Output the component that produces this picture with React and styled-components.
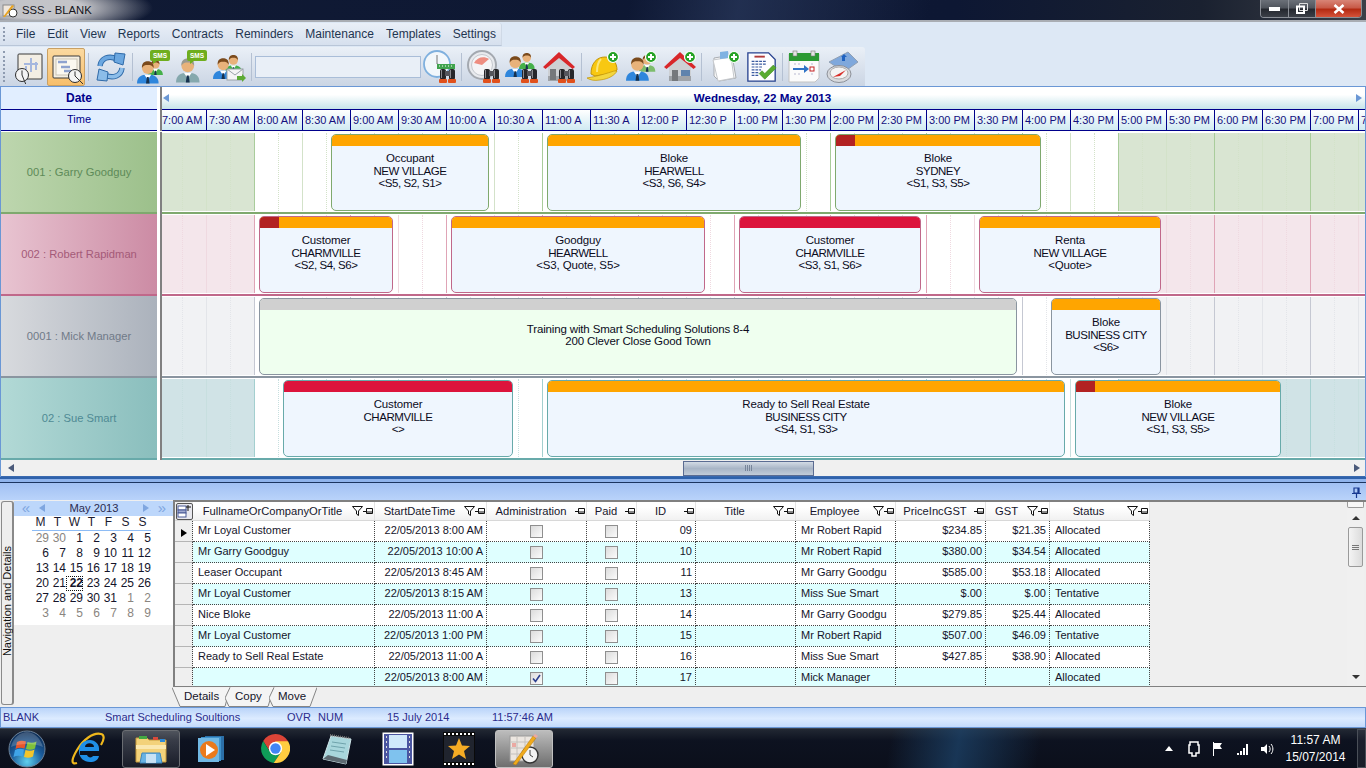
import React from "react";
import styled, { createGlobalStyle } from "styled-components";

const GlobalStyle = createGlobalStyle`
  html, body {
    margin: 0;
    padding: 0;
    width: 1366px;
    height: 768px;
    overflow: hidden;
    background: #dde8f5;
    font-family: "Liberation Sans", Arial, sans-serif;
    font-size: 11px;
  }
  * { box-sizing: border-box; }
`;

const Screen = styled.div`
  display: flex;
  flex-direction: column;
  width: 1366px;
  height: 768px;
  overflow: hidden;
`;

/* ---------- title bar ---------- */
const TitleBar = styled.div`
  display: flex;
  align-items: flex-start;
  justify-content: space-between;
  height: 22px;
  flex: none;
  padding-left: 2px;
  border-bottom: 2px solid #a9adb3;
  background:
    radial-gradient(ellipse 115px 26px at 38px 8px, rgba(205, 205, 208, 0.95) 40%, rgba(205, 205, 208, 0) 100%),
    linear-gradient(100deg, rgba(40, 55, 90, 0) 46%, rgba(40, 55, 90, 0.75) 54%, rgba(40, 55, 90, 0) 68%),
    linear-gradient(90deg, #101a34 0%, #0d1733 70%, #1a2130 88%, #3b3f47 100%);
`;

const TitleLeft = styled.div`
  display: flex;
  align-items: center;
  gap: 4px;
  height: 20px;
  font-size: 11.3px;
  color: #16161c;
`;

const WinButtons = styled.div`
  display: flex;
  height: 18px;
  margin-right: 4px;
  border: 1px solid #8b8f96;
  border-top: 0;
  border-radius: 0 0 4px 4px;
  overflow: hidden;
`;

const WinButton = styled.div`
  display: flex;
  align-items: center;
  justify-content: center;
  width: ${(p) => p.$w}px;
  border-left: ${(p) => (p.$first ? "0" : "1px solid #8b8f96")};
  background: ${(p) =>
    p.$close
      ? "linear-gradient(#d88476 0%, #c85a48 45%, #b32a12 55%, #d5533a 100%)"
      : "linear-gradient(#6b7078 0%, #50555d 45%, #25282f 55%, #3b3f47 100%)"};
`;

/* ---------- menu ---------- */
const MenuRow = styled.div`
  flex: none;
  height: 24px;
  padding-top: 1px;
  background: #dde8f5;
`;

const MenuStrip = styled.div`
  display: flex;
  align-items: center;
  width: 502px;
  height: 23px;
  padding-left: 16px;
  gap: 12px;
  border-bottom: 1px solid #b9c6d8;
  border-right: 1px solid #cfd9e6;
  border-radius: 0 3px 0 0;
  background: linear-gradient(#e9eff7, #d6e0ee);
  color: #1f3550;
  font-size: 12px;
  position: relative;
`;

const Grip = styled.span`
  position: absolute;
  left: 3px;
  top: 4px;
  bottom: 4px;
  width: 2px;
  border-left: 2px dotted #8e9bb0;
`;

const ToolRow = styled.div`
  flex: none;
  height: 40px;
  padding-top: 1px;
  background: #dde8f5;
`;

const ToolStrip = styled.div`
  display: flex;
  align-items: center;
  position: relative;
  width: 865px;
  height: 39px;
  padding-left: 10px;
  border-radius: 0 3px 0 0;
  background: linear-gradient(#eaf0f7, #cbd5e4);
`;

const ToolButton = styled.div`
  display: flex;
  align-items: center;
  justify-content: center;
  flex: none;
  width: ${(p) => p.$w}px;
  height: 38px;
  border: 1px solid ${(p) => (p.$on ? "#c9a063" : "transparent")};
  border-radius: 2px;
  background: ${(p) => (p.$on ? "linear-gradient(#fbd9a0, #f8bf6b)" : "none")};
`;

const ToolSep = styled.div`
  flex: none;
  width: ${(p) => p.$w || 5}px;
  height: 28px;
  display: flex;
  justify-content: center;

  &::before {
    content: "";
    width: 1px;
    background: #b4c0d2;
  }
`;

const SearchBox = styled.div`
  flex: none;
  width: 166px;
  height: 22px;
  margin: 0 1px;
  border: 1px solid #a9bdd8;
  background: #e9eff7;
`;

/* ---------- scheduler ---------- */
const Scheduler = styled.div`
  flex: none;
  height: 391px;
  display: flex;
  flex-direction: column;
  border-left: 1px solid #6a97d5;
  border-right: 1px solid #6a97d5;
  border-top: 1px solid #6a97d5;
  background: #fff;
`;

const HeadRow = styled.div`
  display: flex;
  flex: none;
  height: ${(p) => p.$h}px;
`;

const HeadLabel = styled.div`
  display: flex;
  align-items: center;
  justify-content: center;
  flex: none;
  width: 156px;
  margin-right: 3px;
  padding-bottom: ${(p) => (p.$bold ? 0 : 2)}px;
  background: #e1eeff;
  border-bottom: 1px solid #00008b;
  color: #00008b;
  font-weight: ${(p) => (p.$bold ? 700 : 400)};
  font-size: ${(p) => (p.$bold ? "12px" : "11px")};
`;

const HeadGap = styled.div`
  flex: none;
  width: 2px;
  background: #808080;
`;

const DateBar = styled.div`
  flex: 1;
  display: flex;
  align-items: center;
  justify-content: space-between;
  padding: 0 3px 1px 1px;
  background: linear-gradient(#fff 35%, #c6e4ea 100%);
  border-bottom: 1px solid #00008b;
  color: #00008b;
  font-weight: 700;
  font-size: 11.6px;
`;

const TinyArrow = styled.span`
  width: 0;
  height: 0;
  border-top: 4px solid transparent;
  border-bottom: 4px solid transparent;
  ${(p) =>
    p.$right
      ? `border-left: 6px solid ${p.$c || "#6a97d5"};`
      : `border-right: 6px solid ${p.$c || "#6a97d5"};`}
`;

const TimeStrip = styled.div`
  flex: 1;
  display: flex;
  overflow: hidden;
  border-bottom: 1px solid #00008b;
`;

const TimeCell = styled.div`
  flex: none;
  width: ${(p) => (p.$first ? 45 : 48)}px;
  padding-left: ${(p) => (p.$first ? 0 : 2)}px;
  border-right: 1px solid #00008b;
  background: linear-gradient(#fff, #d0eaf2);
  color: #14107e;
  font-size: 11px;
  line-height: 20px;
  white-space: nowrap;
  overflow: hidden;
`;

const RowsWrap = styled.div`
  flex: none;
  padding-top: 1px;
`;

const ResRow = styled.div`
  display: flex;
  height: 82px;
`;

const ResCell = styled.div`
  display: flex;
  align-items: center;
  justify-content: center;
  flex: none;
  width: 156px;
  margin-right: 3px;
  border-bottom: 2px solid ${(p) => p.$tone.line};
  background: linear-gradient(90deg, ${(p) => p.$tone.from}, ${(p) => p.$tone.to});
  color: ${(p) => p.$tone.text};
  font-size: 11.2px;
`;

const Lane = styled.div`
  flex: 1;
  min-width: 0;
  display: flex;
  position: relative;
  overflow: hidden;
  padding: 1px 0;
  border-bottom: 2px solid ${(p) => p.$tone.line};
`;

const Slot = styled.div`
  flex: none;
  position: relative;
  width: ${(p) => (p.$first ? 45 : 48)}px;
  border-right: 1px solid ${(p) => (p.$strong ? p.$tone.strong : p.$tone.soft)};
  background: ${(p) => (p.$off ? p.$tone.shade : "transparent")};

  &::after {
    content: "";
    position: absolute;
    top: 0;
    bottom: 0;
    right: 23px;
    border-left: 1px dotted ${(p) => p.$tone.soft};
  }
`;

const Appt = styled.div`
  position: absolute;
  top: 2px;
  left: ${(p) => p.$left}px;
  width: ${(p) => p.$width}px;
  height: 77px;
  display: flex;
  align-items: center;
  justify-content: center;
  padding-bottom: 3px;
  border: 1px solid ${(p) => p.$tone.line};
  border-radius: 5px;
  background: ${(p) => (p.$training ? "#efffef" : "#eff6fe")};
  text-align: center;
  overflow: hidden;
  z-index: 1;
`;

const ApptBar = styled.div`
  position: absolute;
  top: 0;
  left: 0;
  right: 0;
  height: 11px;
  background: ${(p) => p.$c};
`;

const ApptTag = styled.div`
  width: 19px;
  height: 11px;
  background: #b22222;
`;

const ApptText = styled.div`
  font-size: 11.5px;
  line-height: 12.5px;
  color: #0b0b1c;
  white-space: nowrap;
`;

const ApptLine = styled.div`
  letter-spacing: ${(p) => (p.$caps ? "-0.45px" : "-0.15px")};
`;

const HScroll = styled.div`
  flex: 1;
  display: flex;
  align-items: center;
  padding: 0 5px 0 7px;
  background: #f0f0f0;
  border-bottom: 1px solid #3a6ab0;
`;

const HTrack = styled.div`
  flex: 1;
  display: flex;
  height: 15px;
  padding-left: 669px;
`;

const HThumb = styled.div`
  display: flex;
  align-items: center;
  justify-content: center;
  gap: 1px;
  width: 131px;
  height: 15px;
  border: 1px solid #5b6c92;
  background: linear-gradient(#d3dbe5, #a8b5c6 50%, #c2ccd9);

  span {
    width: 1px;
    height: 6px;
    background: #77859a;
  }
`;

const Splitter = styled.div`
  flex: none;
  height: 23px;
  display: flex;
  align-items: center;
  justify-content: flex-end;
  padding: 5px 5px 0 0;
  border-top: 2px solid #2f62ab;
  background: linear-gradient(#90b4ec 0, #90b4ec 3px, #1c3560 3px, #1c3560 4px, #a2c1f3 4px, #b9d3fa 100%);
`;

/* ---------- bottom panel ---------- */
const Bottom = styled.div`
  flex: none;
  height: 207px;
  display: flex;
  background: #efefef;
`;

const NavTab = styled.div`
  flex: none;
  display: flex;
  align-items: center;
  justify-content: center;
  width: 13px;
  height: 204px;
  margin: 1px 0 0 1px;
  border: 1px solid #8a8a8a;
  border-right-width: 2px;
  border-radius: 3px;
  background: #eeeeee;
`;

const NavText = styled.span`
  writing-mode: vertical-rl;
  transform: rotate(180deg);
  font-size: 11px;
  color: #111;
  white-space: nowrap;
  padding-top: 4px;
`;

const Calendar = styled.div`
  flex: none;
  width: 159px;
  height: 124px;
  margin-top: 1px;
  background: #fff;
`;

const CalHead = styled.div`
  display: flex;
  align-items: center;
  height: 15px;
  padding: 0 3px 1px 4px;
  background: #bdd7fb;
  color: #2b2b50;
  font-size: 11.2px;
`;

const CalTitle = styled.div`
  flex: 1;
  text-align: center;
`;

const CalNav = styled.span`
  width: 16px;
  display: flex;
  justify-content: center;
  color: #7fa6e0;
  font-size: 15px;
  line-height: 12px;
`;

const CalWeek = styled.div`
  display: grid;
  grid-template-columns: repeat(7, 17px);
  margin-left: 18px;
  width: 119px;
  ${(p) => (p.$head ? "height: 15px; border-bottom: 1px solid #8ebcf5;" : "height: 15px;")}
`;

const CalDow = styled.span`
  text-align: center;
  font-size: 12px;
  line-height: 13px;
  color: #1a1a30;
`;

const CalDay = styled.span`
  position: relative;
  text-align: right;
  font-size: 12px;
  line-height: 15px;
  color: ${(p) => (p.$muted ? "#8a8580" : "#14142a")};
  ${(p) =>
    p.$today &&
    `font-weight: 700;
     outline: 1px dotted #111;
     outline-offset: -1px;`}
`;

const GridArea = styled.div`
  flex: 1;
  min-width: 0;
  display: flex;
  flex-direction: column;
`;

const GridFrame = styled.div`
  flex: none;
  height: 187px;
  display: flex;
  border-top: 2px solid #808080;
  border-left: 2px solid #808080;
  border-bottom: 1px solid #808080;
`;

const GridBody = styled.div`
  flex: 1;
  min-width: 0;
  overflow: hidden;
`;

const columns = "18px 182px 112px 100px 50px 59px 100px 100px 90px 64px 100px";

const GridHead = styled.div`
  display: grid;
  grid-template-columns: ${columns};
  width: 975px;
  height: 19px;
  background: linear-gradient(#fff 30%, #f1f1f1);
  border-bottom: 1px solid #d8d8d8;
`;

const GridCorner = styled.div`
  display: flex;
  align-items: center;
  justify-content: center;
  background: #f0f0f0;
`;

const HeadCell = styled.div`
  display: flex;
  align-items: center;
  border-right: 1px solid #e4e4e4;
  color: #16162c;
  font-size: 11.2px;
  white-space: nowrap;
`;

const HeadText = styled.span`
  flex: 1;
  text-align: center;
`;

const DataRow = styled.div`
  display: grid;
  grid-template-columns: ${columns};
  width: 975px;
  height: 21px;
`;

const RowHead = styled.div`
  display: flex;
  align-items: center;
  justify-content: center;
  padding-top: 4px;
  background: #efefef;
  border-bottom: 1px solid #b5b5b5;
  border-right: 1px dotted #444;
`;

const Cell = styled.div`
  display: flex;
  align-items: center;
  justify-content: ${(p) => (p.$align === "right" ? "flex-end" : p.$align === "center" ? "center" : "flex-start")};
  padding: 0 ${(p) => (p.$align === "right" ? 3 : 0)}px ${(p) => (p.$align === "center" ? 0 : 2)}px ${(p) => (p.$align === "left" ? 5 : 0)}px;
  background: ${(p) => (p.$alt ? "#dfffff" : "#fff")};
  border-right: 1px dotted #444;
  border-bottom: 1px dotted #444;
  color: #14142a;
  font-size: 11px;
  white-space: nowrap;
  overflow: hidden;
`;

const Check = styled.span`
  display: flex;
  align-items: center;
  justify-content: center;
  width: 13px;
  height: 13px;
  border: 1px solid #8f8f8f;
  background: linear-gradient(135deg, #dcdcdc, #fbfbfb);
`;

const VScroll = styled.div`
  flex: none;
  display: flex;
  flex-direction: column;
  align-items: center;
  width: 17px;
  margin-right: 2px;
  background: #f0f0f0;
`;

const VCap = styled.div`
  width: 17px;
  height: 6px;
  border: 1px solid #9a9a9a;
  border-top: 0;
  border-radius: 0 0 2px 2px;
  background: #f7f7f7;
`;

const VArrowUp = styled.span`
  margin-top: 8px;
  width: 0;
  height: 0;
  border-left: 4px solid transparent;
  border-right: 4px solid transparent;
  border-bottom: 4px solid #333;
`;

const VThumb = styled.div`
  display: flex;
  flex-direction: column;
  align-items: center;
  justify-content: center;
  gap: 1px;
  width: 15px;
  height: 40px;
  margin-top: 7px;
  border: 1px solid #9a9a9a;
  border-radius: 2px;
  background: linear-gradient(90deg, #f4f4f4, #dcdcdc);

  span {
    width: 7px;
    height: 1px;
    background: #777;
  }
`;

const VArrowDown = styled.span`
  margin-top: auto;
  margin-bottom: 7px;
  width: 0;
  height: 0;
  border-left: 4px solid transparent;
  border-right: 4px solid transparent;
  border-top: 4px solid #333;
`;

const TabStrip = styled.div`
  flex: none;
  display: flex;
  height: 20px;
  margin-left: -1px;
`;

const Tab = styled.div`
  position: relative;
  flex: none;
  width: ${(p) => p.$w}px;
  margin-left: ${(p) => p.$shift || 0}px;
  padding-left: ${(p) => p.$pad}px;
  font-size: 11.5px;
  line-height: 19px;
  color: #14142a;

  svg {
    position: absolute;
    left: 0;
    top: 0;
  }

  span {
    position: relative;
  }
`;

/* ---------- status + taskbar ---------- */
const StatusBar = styled.div`
  flex: none;
  display: flex;
  align-items: center;
  height: 21px;
  padding-bottom: 2px;
  border: 1px solid #6a97d5;
  background: linear-gradient(#bad4f9, #dcebff 55%, #c3dafb);
  color: #2b2b8c;
  font-size: 11px;
  white-space: nowrap;
`;

const StatusItem = styled.span`
  flex: none;
  width: ${(p) => p.$w}px;
  padding-left: 2px;
`;

const Taskbar = styled.div`
  flex: 1;
  display: flex;
  align-items: center;
  background:
    linear-gradient(100deg, rgba(30, 70, 110, 0) 65%, rgba(30, 70, 110, 0.7) 70%, rgba(30, 70, 110, 0) 76%),
    linear-gradient(#222833, #0d1220 30%, #0b0f1b);
  border-top: 1px solid #3b4350;
`;

const TaskIcon = styled.div`
  flex: none;
  display: flex;
  align-items: center;
  justify-content: center;
  width: ${(p) => p.$w}px;
  height: 38px;
  margin-left: ${(p) => p.$gap || 0}px;
  ${(p) =>
    p.$active === "dark" &&
    `border: 1px solid #6a6d72;
     border-radius: 3px;
     background: linear-gradient(rgba(255,255,255,.22), rgba(255,255,255,.06));`}
  ${(p) =>
    p.$active === "light" &&
    `border: 1px solid #c0c0c0;
     border-radius: 3px;
     background: linear-gradient(#bcbcbc, #6e6e6e);`}
`;

const Tray = styled.div`
  margin-left: auto;
  display: flex;
  align-items: center;
  gap: 10.5px;
  height: 100%;
`;

const Clock = styled.div`
  width: 68px;
  margin-left: -3px;
  text-align: center;
  color: #fff;
  font-size: 12px;
  line-height: 17px;
`;

const ShowDesktop = styled.div`
  width: 9px;
  height: 100%;
  margin-left: -3px;
  border: 1px solid #4a4f58;
  background: rgba(255, 255, 255, 0.06);
`;

/* ---------- drawings ---------- */
const Skin = "#e8b27a";

const Person = ({ x = 0, y = 0, s = 1, shirt = "#2f86dc", hair = "#7a4a1c" }) => (
  <g transform={`translate(${x} ${y}) scale(${s})`}>
    <path d="M0 26c0-7 4-10 12-10s12 3 12 10z" fill={shirt} />
    <path d="M8 16l4 6 4-6z" fill="#fff" />
    <path d="M11 19h2l1 7h-4z" fill="#17324f" />
    <circle cx="12" cy="9" r="6.5" fill={Skin} />
    <path d="M5.5 9C5 3 9 1.5 12 1.5S19 3 18.5 9C17 6 15 5.5 12 5.5S7 6 5.5 9z" fill={hair} />
  </g>
);

const Binoculars = ({ x = 0, y = 0, s = 1 }) => (
  <g transform={`translate(${x} ${y}) scale(${s})`}>
    <rect x="1" y="0" width="6" height="11" rx="2" fill="#26262a" />
    <rect x="10" y="0" width="6" height="11" rx="2" fill="#26262a" />
    <rect x="6" y="2" width="5" height="5" fill="#55555c" />
    <rect x="0" y="10" width="8" height="4" rx="1" fill="#e0501c" />
    <rect x="9" y="10" width="8" height="4" rx="1" fill="#e0501c" />
    <rect x="2" y="1" width="1" height="8" fill="#8a8a90" />
    <rect x="11" y="1" width="1" height="8" fill="#8a8a90" />
  </g>
);

const Plus = ({ x, y, r = 5.5 }) => (
  <g>
    <circle cx={x} cy={y} r={r} fill="#25a225" stroke="#fff" strokeWidth="1.2" />
    <path d={`M${x - 3} ${y}h6M${x} ${y - 3}v6`} stroke="#fff" strokeWidth="2" />
  </g>
);

const Bubble = ({ x, y }) => (
  <g transform={`translate(${x} ${y})`}>
    <path d="M2 0h16a2 2 0 0 1 2 2v7a2 2 0 0 1-2 2H7l-4 3 0-3H2a2 2 0 0 1-2-2V2a2 2 0 0 1 2-2z" fill="#6fae1e" />
    <text x="10" y="8" textAnchor="middle" fontSize="6.5" fontWeight="700" fill="#fff" fontFamily="Liberation Sans">SMS</text>
  </g>
);

const House = ({ x = 0, y = 0, s = 1, door = true }) => (
  <g transform={`translate(${x} ${y}) scale(${s})`}>
    <path d="M5 14L16 4l11 10v15H5z" fill="#cdd0d4" />
    <path d="M5 24h22v5H5z" fill="#9fa3a8" />
    <path d="M0 15L16 0l16 15-2.5 2L16 6 2.5 17z" fill="#d8272a" />
    {door && <rect x="8" y="18" width="6" height="11" fill="#75787c" />}
    {door && <rect x="17" y="18" width="9" height="6" fill="#5f83ad" />}
  </g>
);

const Svg = ({ w = 34, h = 34, children }) => (
  <svg width={w} height={h} viewBox={`0 0 ${w} ${h}`}>
    {children}
  </svg>
);

const ClockFace = ({ x, y, r }) => (
  <g>
    <circle cx={x} cy={y} r={r} fill="#f4f4f4" stroke="#2c2c2c" strokeWidth="1" />
    <path d={`M${x} ${y - r * 0.7}V${y}L${x + r * 0.5} ${y + r * 0.4}`} fill="none" stroke="#333" strokeWidth="1" />
  </g>
);

const IconChart = () => (
  <Svg>
    <rect x="6" y="4" width="24" height="25" rx="1" fill="#f3eee4" stroke="#3a3a3a" />
    <path d="M14 16v9M19 8v14M24 12v8M12 14h14" stroke="#a6b7de" strokeWidth="2" fill="none" />
    <ClockFace x="10" y="25" r="6.5" />
  </Svg>
);

const IconGantt = () => (
  <Svg>
    <rect x="4" y="6" width="27" height="22" rx="1" fill="#f5efe2" stroke="#3a3a3a" />
    <rect x="7" y="9" width="21" height="16" fill="#fbf8f0" stroke="#c9c4b6" />
    <path d="M9 12h9M12 17h9M15 21h7" stroke="#8ea2cf" strokeWidth="2.4" />
    <ClockFace x="26" y="26" r="6.5" />
  </Svg>
);

const IconRefresh = () => (
  <Svg>
    <path d="M6 16C7 8 15 5 23 9" fill="none" stroke="#2f6aa8" strokeWidth="5.5" />
    <path d="M6 16C7 8 15 5 23 9" fill="none" stroke="#6ba7e0" strokeWidth="3.6" />
    <path d="M21 3l10 1-2 11-9-3z" fill="#6ba7e0" stroke="#2f6aa8" />
    <path d="M28 18C27 26 19 29 11 25" fill="none" stroke="#2f6aa8" strokeWidth="5.5" />
    <path d="M28 18C27 26 19 29 11 25" fill="none" stroke="#8cbde9" strokeWidth="3.6" />
    <path d="M13 31L3 30l2-11 9 3z" fill="#8cbde9" stroke="#2f6aa8" />
  </Svg>
);

const IconSmsA = () => (
  <Svg>
    <Person x="11" y="9" s={0.62} shirt="#45b04a" />
    <Person x="0" y="10" s={0.9} />
    <Bubble x="13" y="0" />
  </Svg>
);

const IconSmsB = () => (
  <Svg>
    <Person x="1" y="7" s={0.98} shirt="#85a8ad" hair="#9a9a90" />
    <Bubble x="12" y="0" />
  </Svg>
);

const IconMail = () => (
  <Svg>
    <Person x="12" y="4" s={0.7} shirt="#45b04a" />
    <Person x="0" y="7" s={0.85} />
    <rect x="14" y="19" width="16" height="11" fill="#f4f4f4" stroke="#9aa2a8" />
    <path d="M14 19l8 6 8-6" fill="none" stroke="#9aa2a8" />
    <path d="M24 26h5v-2l4 4-4 4v-2h-5z" fill="#5dab35" />
  </Svg>
);

const IconClockFind = () => (
  <Svg>
    <circle cx="14" cy="14" r="13" fill="#f2f7fb" stroke="#7fb0de" strokeWidth="1.8" />
    <path d="M14 5v9l7 2" fill="none" stroke="#777" strokeWidth="1" />
    <rect x="14" y="14" width="18" height="5" fill="#3fa34d" />
    <path d="M16 16h14" stroke="#fff" strokeDasharray="1 2" />
    <Binoculars x="16" y="19" />
  </Svg>
);

const IconGauge = () => (
  <Svg>
    <circle cx="15" cy="15" r="14" fill="#e8eaee" stroke="#a4a9b0" strokeWidth="2" />
    <circle cx="15" cy="15" r="10.5" fill="#f4f4f6" stroke="#c4c8ce" />
    <path d="M7 13c3-6 10-7 15-4l-7 6z" fill="#ee8d80" />
    <Binoculars x="16" y="19" />
  </Svg>
);

const IconPeopleFind = () => (
  <Svg>
    <Person x="14" y="2" s={0.65} shirt="#45b04a" />
    <Person x="0" y="5" s={0.85} />
    <Binoculars x="16" y="19" />
  </Svg>
);

const IconHouseFind = () => (
  <Svg>
    <House y="2" door={false} />
    <rect x="7" y="19" width="6" height="11" fill="#75787c" />
    <Binoculars x="15" y="19" />
  </Svg>
);

const IconHelmet = () => (
  <Svg>
    <path d="M4 24c0-11 6-17 14-17s12 6 12 13l-4 3-18 3z" fill="#f8c812" stroke="#c29406" />
    <path d="M0 28c5-1 12-2 27-7l3 0c-2 4-8 8-17 9-6 1-10 0-13-2z" fill="#f3d640" stroke="#c29406" strokeWidth=".7" />
    <path d="M14 9c-3 3-4 8-4 13" fill="none" stroke="#fbe67a" strokeWidth="2" />
    <Plus x="26" y="7" />
  </Svg>
);

const IconPersonPlus = () => (
  <Svg>
    <Person x="14" y="4" s={0.68} shirt="#7dbd6c" />
    <Person x="1" y="6" s={0.95} />
    <Plus x="26" y="7" />
  </Svg>
);

const IconHousePlus = () => (
  <Svg>
    <House x="1" y="2" />
    <Plus x="27" y="7" />
  </Svg>
);

const IconNotePlus = () => (
  <Svg>
    <path d="M6 8l18-3 4 23-17 3-5-5z" fill="#f7f7f7" stroke="#a9adb2" />
    <path d="M5 10l18-3 3 21-16 3z" fill="#fff" stroke="#c5c8cc" />
    <path d="M12 2l8-1 1 7-9 1z" fill="#7fb2e2" />
    <Plus x="26" y="7" />
  </Svg>
);

const IconChecklist = () => (
  <Svg>
    <path d="M2 2h22l7 7v23H2z" fill="#fdfdff" stroke="#26418f" strokeWidth="1.4" />
    <path d="M9 6h11" stroke="#b03a3a" strokeWidth="2" />
    <path d="M6 11h16M6 14h16M6 17h12M6 20h10M6 23h8M6 26h8" stroke="#3a5aa0" strokeWidth="1.3" strokeDasharray="3 1" />
    <path d="M14 24l3-3 3 3 9-9 3 3-12 12z" fill="#58ab30" stroke="#3f8a20" strokeWidth=".6" />
  </Svg>
);

const IconCalendar = () => (
  <Svg>
    <path d="M1 4h30v24l-4 4H1z" fill="#fbfbfb" stroke="#c3c3c3" />
    <rect x="1" y="3" width="30" height="8" fill="#2b9a34" />
    <rect x="5" y="1" width="4" height="5" fill="#e4e4e4" stroke="#7a7a7a" strokeWidth=".6" />
    <rect x="23" y="1" width="4" height="5" fill="#e4e4e4" stroke="#7a7a7a" strokeWidth=".6" />
    <path d="M5 19h15" stroke="#2f73c6" strokeWidth="2" />
    <path d="M16 15l5 4-5 4z" fill="#2f73c6" />
    <rect x="22" y="17" width="4" height="4" fill="#fff" stroke="#c42020" />
    <path d="M6 14h2M10 14h2M23 14h2M6 24h2M10 24h2M23 24h2" stroke="#d0d0e0" strokeWidth="1.6" />
  </Svg>
);

const IconMapCompass = () => (
  <Svg>
    <path d="M3 12L22 2l10 10-14 10z" fill="#7fa8dc" stroke="#90a0b4" />
    <path d="M15 7l3-3 3 3-2 0 0 4-3 0 0-4z" fill="#1f62c0" />
    <ellipse cx="13" cy="24" rx="12" ry="8.5" fill="#d8dade" stroke="#8c9098" />
    <ellipse cx="13" cy="23" rx="9" ry="6" fill="#f4f4f4" stroke="#aaa" />
    <path d="M7 27l13-7-6 6z" fill="#d8302a" />
  </Svg>
);

const TitleIcon = () => (
  <Svg w={16} h={16}>
    <rect x="1" y="3" width="11" height="11" fill="#f1e7dc" stroke="#8a8a8a" />
    <circle cx="11" cy="11" r="4" fill="#fff" stroke="#333" />
    <path d="M1 15L10 3l2 1L3 15z" fill="#e8a320" />
  </Svg>
);

const PinSmall = ({ c = "#111" }) => (
  <svg width="11" height="9" viewBox="0 0 11 9">
    <path d="M0 4.5h3M3.5 1.5h6v5h-6zM3.5 5h6" fill="none" stroke={c} />
  </svg>
);

const Funnel = () => (
  <svg width="11" height="10" viewBox="0 0 11 10">
    <path d="M.5.5h10L6.5 5v4.5l-2-1.5V5z" fill="#fff" stroke="#111" />
  </svg>
);

const PinBlue = () => (
  <svg width="9" height="11" viewBox="0 0 9 11">
    <path d="M2 1h5v5H2zM6 1v5M0 6.5h9M4.5 6.5V11" fill="none" stroke="#17378f" strokeWidth="1.2" />
  </svg>
);

const ColumnChooser = () => (
  <svg width="17" height="17" viewBox="0 0 17 17">
    <rect x=".5" y=".5" width="16" height="16" rx="1.5" fill="#e8e8ee" stroke="#555" />
    <rect x="2" y="3" width="8" height="4" fill="#fff" stroke="#4a5a96" />
    <rect x="2" y="7" width="8" height="3" fill="#9fa9d0" stroke="#4a5a96" />
    <rect x="2" y="10" width="8" height="4" fill="#fff" stroke="#4a5a96" />
    <path d="M12 2v6M10 4h5" stroke="#111" />
  </svg>
);

const CheckMark = () => (
  <svg width="9" height="9" viewBox="0 0 9 9">
    <path d="M1 4.5l2.5 3L8 1" fill="none" stroke="#2c3f8f" strokeWidth="1.6" />
  </svg>
);

const Orb = () => (
  <svg width="38" height="38" viewBox="0 0 38 38">
    <defs>
      <radialGradient id="orb" cx=".5" cy=".85" r=".8">
        <stop offset="0" stopColor="#5fd0ee" />
        <stop offset=".55" stopColor="#1b5c9c" />
        <stop offset="1" stopColor="#0d2e58" />
      </radialGradient>
    </defs>
    <circle cx="19" cy="19" r="18" fill="url(#orb)" stroke="#6d8298" />
    <path d="M9 12c3-1.5 6-1.5 9-.5l-1.5 7c-3-1-6-1-9 .5z" fill="#e8562a" />
    <path d="M19.5 12c3 1 6 1 9-.5l-1.5 7c-3 1.5-6 1.5-9 .5z" fill="#7fc13a" />
    <path d="M7 20c3-1.5 6-1.5 9-.5l-1.5 7c-3-1-6-1-9 .5z" fill="#3fa4e8" />
    <path d="M17.5 20c3 1 6 1 9-.5l-1.5 7c-3 1.5-6 1.5-9 .5z" fill="#f4c52a" />
    <path d="M3 17C5 7 13 2 19 2s13 5 16 15c-8-4-24-4-32 0z" fill="#fff" opacity=".2" />
  </svg>
);

const IeLogo = () => (
  <svg width="34" height="34" viewBox="0 0 34 34">
    <path d="M6 31C0 33 0 28 6 18 12 8 22 0 30 2c4 1 3 6 0 11" fill="none" stroke="#f0b81c" strokeWidth="2.2" />
    <path d="M9 19h19c1-7-4-11-9-11-7 0-11 5-11 11 0 7 5 11 11 11 5 0 8-2 9-6h-6c-1 2-5 2-6-1H9z" fill="#1f8fe6" />
    <path d="M14 15c0-5 9-5 9 0z" fill="#0b0f1b" />
  </svg>
);

const Folder = () => (
  <svg width="32" height="32" viewBox="0 0 32 32">
    <path d="M1 5h11l2 2h17v22H1z" fill="#f3d27a" stroke="#c79a3a" />
    <rect x="4" y="3" width="8" height="3" fill="#43a843" />
    <rect x="18" y="4" width="5" height="3" fill="#d84a3a" />
    <rect x="25" y="6" width="5" height="3" fill="#2f8ad6" />
    <path d="M1 12h30v4H1z" fill="#fae8b0" />
    <path d="M7 20h18l2 10H5z" fill="#67b2e4" stroke="#3e86bc" />
    <path d="M11 21h10v9H11z" fill="#f1f7fc" opacity=".7" />
  </svg>
);

const MediaPlayer = () => (
  <svg width="28" height="28" viewBox="0 0 28 28">
    <rect x="8" y="1" width="19" height="24" fill="#2b6fa8" />
    <rect x="4" y="2" width="20" height="24" fill="#3e92cc" />
    <rect x="1" y="3" width="21" height="24" fill="#71b8e4" />
    <circle cx="12" cy="15" r="9" fill="#ea7a1c" />
    <path d="M9 9l9 6-9 6z" fill="#fff" />
  </svg>
);

const Chrome = () => (
  <svg width="29" height="29" viewBox="0 0 48 48">
    <path d="M24 24L44.8 12A24 24 0 0 0 3.6 11.5L14 28z" fill="#db4437" />
    <path d="M24 24L14 28 3.6 11.5A24 24 0 0 0 21 47.8L33 30z" fill="#0f9d58" />
    <path d="M24 24l9 6L21 47.8A24 24 0 0 0 44.8 12H24z" fill="#ffcd40" />
    <circle cx="24" cy="24" r="11" fill="#fff" />
    <circle cx="24" cy="24" r="8.6" fill="#4285f4" />
  </svg>
);

const Notepad = () => (
  <svg width="32" height="32" viewBox="0 0 32 32">
    <path d="M10 3l20 3-5 25L2 26z" fill="#a8d6dc" stroke="#cfe4e8" />
    <path d="M9 2l20 3" stroke="#777" strokeWidth="2" strokeDasharray="1 1" />
    <path d="M11 9l14 2M10 13l14 2M9 17l14 2" stroke="#6fa3ac" />
    <path d="M2 26l23 5 1-4-19-5z" fill="#5d6a72" />
  </svg>
);

const FilmStrip = () => (
  <svg width="32" height="34" viewBox="0 0 32 34">
    <rect x=".5" y=".5" width="31" height="33" fill="#fff" />
    <rect x="2" y="2" width="28" height="30" fill="#4a55a0" />
    <rect x="7" y="3" width="18" height="13" fill="#cfe8fb" />
    <rect x="7" y="18" width="18" height="13" fill="#7fc2ee" />
    <path d="M4 5h1M4 10h1M4 15h1M4 20h1M4 25h1M27 5h1M27 10h1M27 15h1M27 20h1M27 25h1" stroke="#ddd" strokeWidth="2" />
  </svg>
);

const StarFilm = () => (
  <svg width="32" height="34" viewBox="0 0 32 34">
    <rect width="32" height="34" fill="#0a0a0a" />
    <rect x="1" y="4" width="30" height="26" fill="#20242e" />
    <path d="M1 2h30M1 32h30" stroke="#fff" strokeWidth="2" strokeDasharray="2 2" />
    <path d="M16 6l3 7.5 8 .5-6 5 2 8-7-4.5L9 27l2-8-6-5 8-.5z" fill="#f4ab24" />
  </svg>
);

const AppLogo = () => (
  <svg width="34" height="34" viewBox="0 0 34 34">
    <rect x="3" y="4" width="24" height="25" fill="#ece6e0" stroke="#9a9a9a" />
    <path d="M3 10h24M3 16h24M3 22h24M10 4v25M18 4v25" stroke="#c4c0bc" />
    <rect x="5" y="11" width="4" height="4" fill="#eba9a2" />
    <circle cx="23" cy="23" r="8" fill="#f3f3f3" stroke="#333" strokeWidth="1.4" />
    <path d="M23 18v5l3 2" fill="none" stroke="#444" />
    <path d="M6 32L26 4l3 2L9 33z" fill="#f0aa1c" stroke="#b27608" strokeWidth=".5" />
    <path d="M26 4l2-2 3 2-2 2z" fill="#eba9a2" />
  </svg>
);

const TrayIcon = ({ children }) => (
  <svg width="14" height="16" viewBox="0 0 14 16" fill="#fff">
    {children}
  </svg>
);

/* ---------- data ---------- */
const tones = {
  green: { line: "#7fa96e", from: "#bdd6ae", to: "#9cc08b", text: "#5d8a58", strong: "#a9cc9b", soft: "#d3e2c9", shade: "#d9e5d2" },
  pink: { line: "#c0688a", from: "#e8c4d1", to: "#cc8ba4", text: "#a45a78", strong: "#dfa4b6", soft: "#efd9e0", shade: "#f4e6eb" },
  gray: { line: "#8a95a0", from: "#d8dade", to: "#abb2bc", text: "#707a88", strong: "#c5c8d2", soft: "#e3e5e9", shade: "#f1f2f4" },
  teal: { line: "#68aaaa", from: "#b2d9d6", to: "#8abebd", text: "#4f8a94", strong: "#a3cfcf", soft: "#c7dfdf", shade: "#d0e3e6" },
};

const ORANGE = "#ffa500";
const CRIMSON = "#dc143c";
const GREY = "#d0d0d0";

const resources = [
  {
    name: "001 : Garry Goodguy",
    tone: tones.green,
    appts: [
      { x: 331, w: 158, bar: ORANGE, lines: ["Occupant", "NEW VILLAGE", "<S5, S2, S1>"] },
      { x: 547, w: 254, bar: ORANGE, lines: ["Bloke", "HEARWELL", "<S3, S6, S4>"] },
      { x: 835, w: 206, bar: ORANGE, tag: true, lines: ["Bloke", "SYDNEY", "<S1, S3, S5>"] },
    ],
  },
  {
    name: "002 : Robert Rapidman",
    tone: tones.pink,
    appts: [
      { x: 259, w: 134, bar: ORANGE, tag: true, lines: ["Customer", "CHARMVILLE", "<S2, S4, S6>"] },
      { x: 451, w: 254, bar: ORANGE, lines: ["Goodguy", "HEARWELL", "<S3, Quote, S5>"] },
      { x: 739, w: 182, bar: CRIMSON, lines: ["Customer", "CHARMVILLE", "<S3, S1, S6>"] },
      { x: 979, w: 182, bar: ORANGE, lines: ["Renta", "NEW VILLAGE", "<Quote>"] },
    ],
  },
  {
    name: "0001 : Mick Manager",
    tone: tones.gray,
    appts: [
      { x: 259, w: 758, bar: GREY, training: true, lines: ["Training with Smart Scheduling Solutions 8-4", "200 Clever Close Good Town"] },
      { x: 1051, w: 110, bar: ORANGE, lines: ["Bloke", "BUSINESS CITY", "<S6>"] },
    ],
  },
  {
    name: "02 : Sue Smart",
    tone: tones.teal,
    appts: [
      { x: 283, w: 230, bar: CRIMSON, lines: ["Customer", "CHARMVILLE", "<>"] },
      { x: 547, w: 518, bar: ORANGE, lines: ["Ready to Sell Real Estate", "BUSINESS CITY", "<S4, S1, S3>"] },
      { x: 1075, w: 206, bar: ORANGE, tag: true, lines: ["Bloke", "NEW VILLAGE", "<S1, S3, S5>"] },
    ],
  },
];

const times = [
  "7:00 AM", "7:30 AM", "8:00 AM", "8:30 AM", "9:00 AM", "9:30 AM", "10:00 A", "10:30 A", "11:00 A", "11:30 A",
  "12:00 P", "12:30 P", "1:00 PM", "1:30 PM", "2:00 PM", "2:30 PM", "3:00 PM", "3:30 PM", "4:00 PM", "4:30 PM",
  "5:00 PM", "5:30 PM", "6:00 PM", "6:30 PM", "7:00 PM", "7",
];

const menus = ["File", "Edit", "View", "Reports", "Contracts", "Reminders", "Maintenance", "Templates", "Settings"];

const weeks = [
  [29, 30, 1, 2, 3, 4, 5],
  [6, 7, 8, 9, 10, 11, 12],
  [13, 14, 15, 16, 17, 18, 19],
  [20, 21, 22, 23, 24, 25, 26],
  [27, 28, 29, 30, 31, 1, 2],
  [3, 4, 5, 6, 7, 8, 9],
];

const gridHead = [
  { t: "FullnameOrCompanyOrTitle", f: true },
  { t: "StartDateTime", f: true },
  { t: "Administration" },
  { t: "Paid" },
  { t: "ID" },
  { t: "Title", f: true },
  { t: "Employee", f: true },
  { t: "PriceIncGST" },
  { t: "GST", f: true },
  { t: "Status", f: true },
];

const orders = [
  ["Mr Loyal Customer", "22/05/2013 8:00 AM", false, "09", "Mr Robert Rapid", "$234.85", "$21.35", "Allocated"],
  ["Mr Garry Goodguy", "22/05/2013 10:00 A", false, "10", "Mr Robert Rapid", "$380.00", "$34.54", "Allocated"],
  ["Leaser Occupant", "22/05/2013 8:45 AM", false, "11", "Mr Garry Goodgu", "$585.00", "$53.18", "Allocated"],
  ["Mr Loyal Customer", "22/05/2013 8:15 AM", false, "13", "Miss Sue Smart", "$.00", "$.00", "Tentative"],
  ["Nice Bloke", "22/05/2013 11:00 A", false, "14", "Mr Garry Goodgu", "$279.85", "$25.44", "Allocated"],
  ["Mr Loyal Customer", "22/05/2013 1:00 PM", false, "15", "Mr Robert Rapid", "$507.00", "$46.09", "Tentative"],
  ["Ready to Sell Real Estate", "22/05/2013 11:00 A", false, "16", "Miss Sue Smart", "$427.85", "$38.90", "Allocated"],
  ["", "22/05/2013 8:00 AM", true, "17", "Mick Manager", "", "", "Allocated"],
];

const tabs = [
  { label: "Details", w: 58, pad: 12, shift: 0, d: "M0 .5L8 19.5H53L58 .5" },
  { label: "Copy", w: 49, pad: 10, shift: -5, d: "M5 .5L0 11L4 19.5H43L49 .5" },
  { label: "Move", w: 48, pad: 9, shift: -5, d: "M5 .5L0 11L4 19.5H41L48 .5" },
];

function Resource({ res }) {
  return (
    <ResRow>
      <ResCell $tone={res.tone}>{res.name}</ResCell>
      <HeadGap />
      <Lane $tone={res.tone}>
        {times.map((t, i) => (
          <Slot key={t} $tone={res.tone} $first={i === 0} $strong={i % 2 === 1} $off={i < 2 || i >= 20} />
        ))}
        {res.appts.map((a) => (
          <Appt key={a.x} $left={a.x - 162} $width={a.w} $tone={res.tone} $training={a.training}>
            <ApptBar $c={a.bar}>{a.tag && <ApptTag />}</ApptBar>
            <ApptText>
              {a.lines.map((l) => (
                <ApptLine key={l} $caps={l === l.toUpperCase()}>{l}</ApptLine>
              ))}
            </ApptText>
          </Appt>
        ))}
      </Lane>
    </ResRow>
  );
}

export default function App() {
  return (
    <Screen>
      <GlobalStyle />
      <TitleBar>
        <TitleLeft>
          <TitleIcon />
          SSS - BLANK
        </TitleLeft>
        <WinButtons>
          <WinButton $w={27} $first>
            <svg width="11" height="4"><rect width="11" height="4" fill="#fff" /></svg>
          </WinButton>
          <WinButton $w={27}>
            <svg width="12" height="11" viewBox="0 0 12 11">
              <path d="M3.5.5h8v7h-8z" fill="none" stroke="#ddd" />
              <path d="M1 3.5h7v6.5H1z" fill="none" stroke="#fff" strokeWidth="2" />
            </svg>
          </WinButton>
          <WinButton $w={46} $close>
            <svg width="12" height="10" viewBox="0 0 12 10">
              <path d="M1.5 1l9 8M10.5 1l-9 8" stroke="#fff" strokeWidth="2.6" />
            </svg>
          </WinButton>
        </WinButtons>
      </TitleBar>

      <MenuRow>
        <MenuStrip>
          <Grip />
          {menus.map((m) => (
            <span key={m}>{m}</span>
          ))}
        </MenuStrip>
      </MenuRow>

      <ToolRow>
        <ToolStrip>
          <Grip />
          <ToolButton $w={37}><IconChart /></ToolButton>
          <ToolButton $w={38} $on><IconGantt /></ToolButton>
          <ToolSep $w={6} />
          <ToolButton $w={39}><IconRefresh /></ToolButton>
          <ToolSep />
          <ToolButton $w={37}><IconSmsA /></ToolButton>
          <ToolButton $w={39}><IconSmsB /></ToolButton>
          <ToolButton $w={38}><IconMail /></ToolButton>
          <ToolSep />
          <SearchBox />
          <ToolButton $w={36}><IconClockFind /></ToolButton>
          <ToolSep $w={6} />
          <ToolButton $w={40}><IconGauge /></ToolButton>
          <ToolButton $w={36}><IconPeopleFind /></ToolButton>
          <ToolButton $w={39}><IconHouseFind /></ToolButton>
          <ToolSep />
          <ToolButton $w={40}><IconHelmet /></ToolButton>
          <ToolButton $w={36}><IconPersonPlus /></ToolButton>
          <ToolButton $w={39}><IconHousePlus /></ToolButton>
          <ToolSep />
          <ToolButton $w={41}><IconNotePlus /></ToolButton>
          <ToolButton $w={34}><IconChecklist /></ToolButton>
          <ToolSep $w={7} />
          <ToolButton $w={38}><IconCalendar /></ToolButton>
          <ToolButton $w={38}><IconMapCompass /></ToolButton>
        </ToolStrip>
      </ToolRow>

      <Scheduler>
        <HeadRow $h={23}>
          <HeadLabel $bold>Date</HeadLabel>
          <HeadGap />
          <DateBar>
            <TinyArrow />
            <span>Wednesday, 22 May 2013</span>
            <TinyArrow $right />
          </DateBar>
        </HeadRow>
        <HeadRow $h={21}>
          <HeadLabel>Time</HeadLabel>
          <HeadGap />
          <TimeStrip>
            {times.map((t, i) => (
              <TimeCell key={t} $first={i === 0}>{t}</TimeCell>
            ))}
          </TimeStrip>
        </HeadRow>
        <RowsWrap>
          {resources.map((r) => (
            <Resource key={r.name} res={r} />
          ))}
        </RowsWrap>
        <HScroll>
          <TinyArrow $c="#4a5a7a" />
          <HTrack>
            <HThumb>
              <span /><span /><span /><span />
            </HThumb>
          </HTrack>
          <TinyArrow $right $c="#4a5a7a" />
        </HScroll>
      </Scheduler>

      <Splitter>
        <PinBlue />
      </Splitter>

      <Bottom>
        <NavTab>
          <NavText>Navigation and Details</NavText>
        </NavTab>
        <Calendar>
          <CalHead>
            <CalNav>«</CalNav>
            <CalNav><TinyArrow $c="#7fa6e0" /></CalNav>
            <CalTitle>May 2013</CalTitle>
            <CalNav><TinyArrow $right $c="#7fa6e0" /></CalNav>
            <CalNav>»</CalNav>
          </CalHead>
          <CalWeek $head>
            {["M", "T", "W", "T", "F", "S", "S"].map((d, i) => (
              <CalDow key={i}>{d}</CalDow>
            ))}
          </CalWeek>
          {weeks.map((w, wi) => (
            <CalWeek key={wi}>
              {w.map((d, di) => (
                <CalDay
                  key={di}
                  $muted={(wi === 0 && di < 2) || (wi === 4 && di > 4) || wi === 5}
                  $today={wi === 3 && d === 22}
                >
                  {d}
                </CalDay>
              ))}
            </CalWeek>
          ))}
        </Calendar>
        <GridArea>
          <GridFrame>
            <GridBody>
              <GridHead>
                <GridCorner><ColumnChooser /></GridCorner>
                {gridHead.map((h) => (
                  <HeadCell key={h.t}>
                    <HeadText>{h.t}</HeadText>
                    {h.f && <Funnel />}
                    <PinSmall />
                  </HeadCell>
                ))}
              </GridHead>
              {orders.map((o, i) => (
                <DataRow key={o[3]}>
                  <RowHead>{i === 0 && <TinyArrow $right $c="#000" />}</RowHead>
                  <Cell $alt={i % 2 === 1} $align="left">{o[0]}</Cell>
                  <Cell $alt={i % 2 === 1} $align="right">{o[1]}</Cell>
                  <Cell $alt={i % 2 === 1} $align="center">
                    <Check>{o[2] && <CheckMark />}</Check>
                  </Cell>
                  <Cell $alt={i % 2 === 1} $align="center"><Check /></Cell>
                  <Cell $alt={i % 2 === 1} $align="right">{o[3]}</Cell>
                  <Cell $alt={i % 2 === 1} $align="left" />
                  <Cell $alt={i % 2 === 1} $align="left">{o[4]}</Cell>
                  <Cell $alt={i % 2 === 1} $align="right">{o[5]}</Cell>
                  <Cell $alt={i % 2 === 1} $align="right">{o[6]}</Cell>
                  <Cell $alt={i % 2 === 1} $align="left">{o[7]}</Cell>
                </DataRow>
              ))}
            </GridBody>
            <VScroll>
              <VCap />
              <VArrowUp />
              <VThumb><span /><span /><span /></VThumb>
              <VArrowDown />
            </VScroll>
          </GridFrame>
          <TabStrip>
            {tabs.map((t) => (
              <Tab key={t.label} $w={t.w} $pad={t.pad} $shift={t.shift}>
                <svg width={t.w} height="20" viewBox={`0 0 ${t.w} 20`}>
                  <path d={t.d} fill="#f4f4f4" stroke="#858585" />
                </svg>
                <span>{t.label}</span>
              </Tab>
            ))}
          </TabStrip>
        </GridArea>
      </Bottom>

      <StatusBar>
        <StatusItem $w={102}>BLANK</StatusItem>
        <StatusItem $w={182}>Smart Scheduling Soultions</StatusItem>
        <StatusItem $w={31}>OVR</StatusItem>
        <StatusItem $w={69}>NUM</StatusItem>
        <StatusItem $w={105}>15 July 2014</StatusItem>
        <StatusItem $w={100}>11:57:46 AM</StatusItem>
      </StatusBar>

      <Taskbar>
        <TaskIcon $w={54}><Orb /></TaskIcon>
        <TaskIcon $w={68}><IeLogo /></TaskIcon>
        <TaskIcon $w={58} $active="dark"><Folder /></TaskIcon>
        <TaskIcon $w={62}><MediaPlayer /></TaskIcon>
        <TaskIcon $w={66}><Chrome /></TaskIcon>
        <TaskIcon $w={58}><Notepad /></TaskIcon>
        <TaskIcon $w={64}><FilmStrip /></TaskIcon>
        <TaskIcon $w={58}><StarFilm /></TaskIcon>
        <TaskIcon $w={58} $gap={7} $active="light"><AppLogo /></TaskIcon>
        <Tray>
          <TrayIcon><path d="M3 10l4-5 4 5z" /></TrayIcon>
          <TrayIcon><path d="M3 1h8v3h1v8H9v3H5v-3H2V4h1z" fill="none" stroke="#fff" strokeWidth="1.5" /></TrayIcon>
          <TrayIcon><path d="M2 1h1v14H2zM3 2h8l-2 3 2 3H3z" /></TrayIcon>
          <TrayIcon><path d="M1 12h2v2H1zM4 10h2v4H4zM7 7h2v7H7zM10 3h2v11h-2z" /></TrayIcon>
          <TrayIcon><path d="M1 6h3l3-3v10L4 10H1z" /><path d="M9 5c1.5 2 1.5 4 0 6M11 3c2.5 3 2.5 7 0 10" fill="none" stroke="#fff" /></TrayIcon>
          <Clock>
            11:57 AM
            <br />
            15/07/2014
          </Clock>
          <ShowDesktop />
        </Tray>
      </Taskbar>
    </Screen>
  );
}
